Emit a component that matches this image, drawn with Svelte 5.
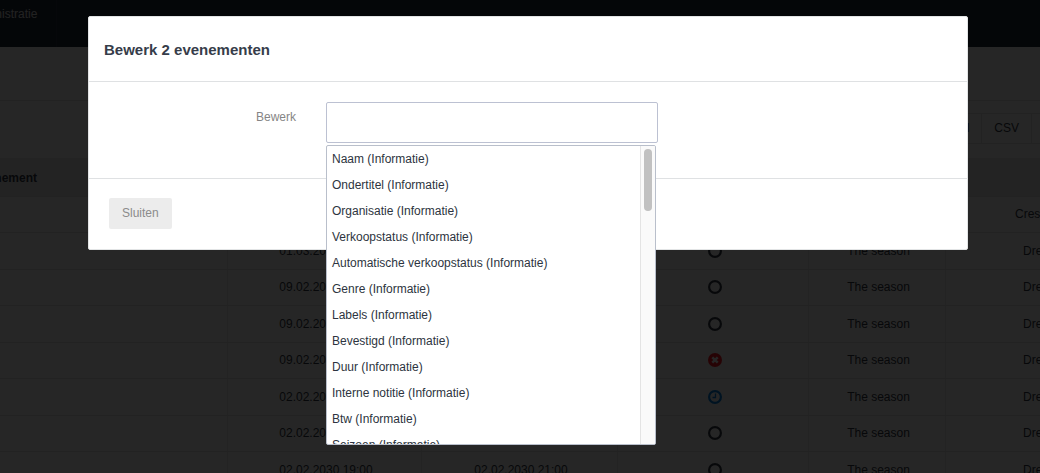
<script lang="ts">
  const options = [
    'Naam', 'Ondertitel', 'Organisatie', 'Verkoopstatus', 'Automatische verkoopstatus', 'Genre',
    'Labels', 'Bevestigd', 'Duur', 'Interne notitie', 'Btw', 'Seizoen'
  ];
  const rows = [
    { date: '01.03.2030', status: 'open', venue: 'Crescendo' },
    { date: '01.03.2030', status: 'open', venue: 'Dreams' },
    { date: '09.02.2030', status: 'open', venue: 'Dreams' },
    { date: '09.02.2030', status: 'open', venue: 'Dreams' },
    { date: '09.02.2030', status: 'cancelled', venue: 'Dreams' },
    { date: '02.02.2030', status: 'planned', venue: 'Dreams' },
    { date: '02.02.2030', status: 'open', venue: 'Dreams' },
    { date: '02.02.2030', status: 'open', venue: 'Dreams' }
  ];
  let query = $state('');
</script>

<div class="screen">
  <div class="page" inert>
    <nav><a href="#admin">Administratie</a></nav>
    <div class="heading"></div>
    <div class="toolbar">
      <div class="exports">
        <button>Excel</button><button>CSV</button><button>PDF</button>
      </div>
    </div>
    <table>
      <colgroup>
        <col /><col class="date" /><col class="end" /><col class="status" /><col class="season" /><col class="venue" />
      </colgroup>
      <thead>
        <tr><th>Evenement</th><th></th><th></th><th></th><th></th><th></th></tr>
      </thead>
      <tbody>
        {#each rows as row}
          <tr>
            <td></td>
            <td>{row.date} 19:00</td>
            <td>{row.date} 21:00</td>
            <td>
              <svg class={row.status} width="14" height="14" viewBox="0 0 14 14" fill="none" stroke="currentColor" stroke-width="2.2">
                {#if row.status === 'cancelled'}
                  <circle cx="7" cy="7" r="7" fill="currentColor" stroke="none" />
                  <path class="cross" d="M4.3 4.3l5.4 5.4m0-5.4l-5.4 5.4" stroke-width="2.4" />
                {:else}
                  <circle cx="7" cy="7" r="5.9" />
                  {#if row.status === 'planned'}
                    <path d="M7.5 3.5V7.5H4.5" stroke-width="1.3" />
                  {/if}
                {/if}
              </svg>
            </td>
            <td>The season</td>
            <td>{row.venue}</td>
          </tr>
        {/each}
      </tbody>
    </table>
  </div>

  <div class="backdrop">
    <div class="modal" role="dialog" aria-modal="true" aria-labelledby="title">
      <header><h1 id="title">Bewerk 2 evenementen</h1></header>
      <div class="body">
        <label for="field">Bewerk</label>
        <div class="select">
          <input id="field" type="text" role="combobox" aria-expanded="true" aria-controls="choices" autocomplete="off" bind:value={query} />
          <div class="dropdown">
            <ul id="choices" role="listbox">
              {#each options as option}
                <li role="option" aria-selected="false">{option} (Informatie)</li>
              {/each}
            </ul>
            <div class="track"><div class="thumb"></div></div>
          </div>
        </div>
      </div>
      <footer><button class="close">Sluiten</button></footer>
    </div>
  </div>
</div>

<style>
  :global(body) {
    margin: 0;
    overflow: hidden;
  }
  .screen, .screen button, .screen input {
    font-family: "Liberation Sans", Arial, sans-serif;
    font-size: 12px;
  }
  .screen {
    position: relative;
    height: 100vh;
    overflow: hidden;
    background: #fff;
    color: #343a46;
  }
  .page {
    margin: 0 -100px 0 -48px;
  }
  nav {
    display: flex;
    height: 47px;
    background: #202838;
  }
  nav a {
    padding: 7px 19px 0 16px;
    line-height: 14px;
    border-right: 1px solid #2b3445;
    color: #e4e4e4;
    text-decoration: none;
  }
  .heading {
    height: 53px;
    border-bottom: 1px solid #e4e4e4;
  }
  .toolbar {
    display: flex;
    justify-content: flex-end;
    padding: 12px 59px 14px;
  }
  .exports {
    display: flex;
    border: 1px solid #e4e4e4;
    border-right: 0;
  }
  .exports button {
    height: 29px;
    padding: 0 12px 2px;
    border: 0;
    border-right: 1px solid #e4e4e4;
    background: none;
    color: #343a46;
  }
  table {
    width: 100%;
    table-layout: fixed;
    border-collapse: separate;
    border-spacing: 0;
  }
  .date { width: 194px; }
  .end { width: 196px; }
  .status { width: 191px; }
  .season { width: 137px; }
  .venue { width: 194px; }
  th, td {
    box-sizing: border-box;
    height: 36px;
    padding: 0 0 1px 3px;
    border-right: 1px solid #e6e6e6;
    border-bottom: 1px solid #e4e4e4;
    text-align: center;
  }
  tr:nth-child(even) td {
    height: 37px;
  }
  th {
    height: 39px;
    padding: 2px 0 0 21px;
    border-right: 0;
    background: #ebebeb;
    text-align: left;
  }
  svg {
    display: block;
    margin: 0 auto;
  }
  .cancelled { color: #ff1a24; }
  .cross { stroke: #fff; }
  .planned { color: #0080e0; }

  .backdrop {
    position: absolute;
    inset: 0;
    padding: 16px 72px 0 88px;
    background: rgba(0, 0, 0, 0.85);
  }
  .modal {
    border: 1px solid #e2e4e5;
    border-radius: 2px;
    background: #fff;
  }
  header {
    padding: 24px 15px 23px;
    border-bottom: 1px solid #dfe1e3;
  }
  h1 {
    margin: 0;
    font-size: 15px;
    line-height: 17px;
    font-weight: 700;
    color: #363d4a;
  }
  .body {
    display: grid;
    grid-template-columns: minmax(0, 192px) minmax(0, 332px);
    gap: 30px;
    padding: 20px 15px 35px;
  }
  label {
    padding-top: 8px;
    line-height: 14px;
    text-align: right;
    color: #858585;
  }
  .select {
    position: relative;
  }
  input {
    display: block;
    box-sizing: border-box;
    width: 100%;
    height: 41px;
    padding: 0 8px;
    border: 1px solid #bcc1d2;
    border-radius: 2px;
    outline: 0;
    background: #fff;
  }
  .dropdown {
    position: absolute;
    top: 43px;
    left: 0;
    right: 2px;
    z-index: 1;
    display: flex;
    box-sizing: border-box;
    height: 300px;
    overflow: hidden;
    border: 1px solid #b9bfcb;
    border-radius: 2px;
    background: #fff;
  }
  ul {
    flex: 1;
    margin: 0;
    padding: 0;
    list-style: none;
  }
  li {
    padding-left: 5px;
    line-height: 26px;
    color: #2d3440;
  }
  .track {
    box-sizing: border-box;
    width: 15px;
    padding: 3px 3px 0 3px;
    border-left: 1px solid #e4e4e4;
    background: #fafafa;
  }
  .thumb {
    width: 8px;
    height: 62px;
    border-radius: 4px;
    background: #c1c1c1;
  }
  footer {
    padding: 19px 20px 20px;
    border-top: 1px solid #dfe1e3;
  }
  .close {
    display: block;
    height: 31px;
    padding: 0 13px 2px;
    border: 0;
    border-radius: 2px;
    background: #ececec;
    color: #8b8b8b;
  }
</style>
